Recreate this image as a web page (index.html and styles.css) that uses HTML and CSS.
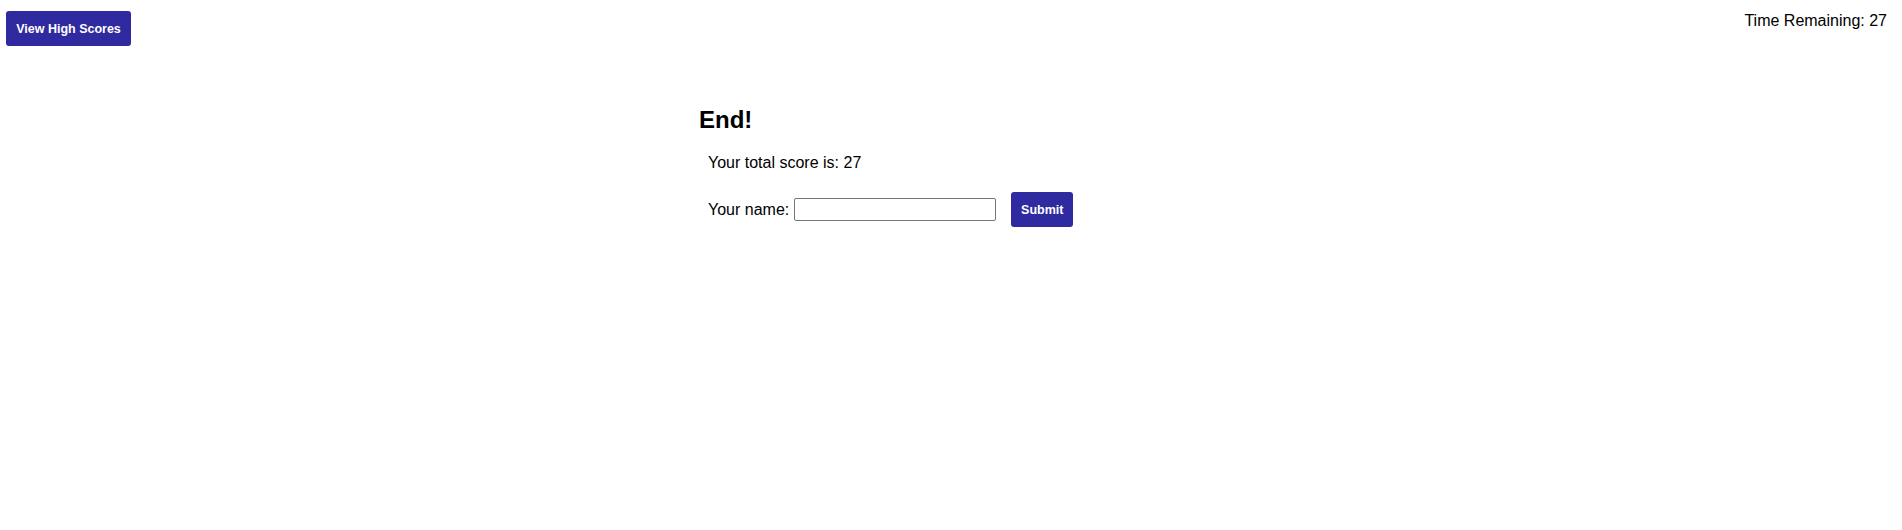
FILE: index.html
```html
<!DOCTYPE html>
<html lang="en">
<head>
<meta charset="utf-8">
<title>Quiz</title>
<link rel="stylesheet" href="styles.css">
</head>
<body>
<header class="topbar">
  <button class="btn btn-scores">View High Scores</button>
  <div class="timer">Time Remaining: 27</div>
</header>
<main class="quiz">
  <h2 class="quiz-title">End!</h2>
  <p class="score">Your total score is: 27</p>
  <form class="name-form">
    <label class="name-label" for="name">Your name:</label>
    <input class="name-input" id="name" type="text">
    <button class="btn btn-submit" type="button">Submit</button>
  </form>
</main>
</body>
</html>
```
FILE: styles.css
```css
html, body {
  margin: 0;
  padding: 0;
  background: #ffffff;
  font-family: "Liberation Sans", Arial, sans-serif;
  color: #000000;
}

.topbar {
  display: flex;
  justify-content: space-between;
  align-items: flex-start;
  padding: 11px 15px 0 6px;
}

.btn {
  background: #2f2a9f;
  color: #ffffff;
  border: none;
  border-radius: 3px;
  font-family: "Liberation Sans", Arial, sans-serif;
  font-weight: bold;
  font-size: 12.5px;
  height: 35px;
  padding: 0 10px;
  cursor: pointer;
}

.btn-scores {
  width: 125px;
  padding: 0;
}

.timer {
  font-size: 16px;
  line-height: 18px;
  margin-top: 1px;
}

.quiz {
  width: 504px;
  margin: 0 auto;
  padding-top: 60px;
}

.quiz-title {
  margin: 0;
  font-size: 24px;
  line-height: 28px;
  font-weight: bold;
}

.score {
  margin: 20px 0 0 9px;
  font-size: 16px;
  line-height: 18px;
}

.name-form {
  display: flex;
  align-items: center;
  margin: 20px 0 0 9px;
  font-size: 16px;
}

.name-label {
  margin-right: 5px;
}

.name-input {
  box-sizing: border-box;
  width: 202px;
  height: 23px;
  border: 1px solid #767676;
  border-radius: 2px;
  padding: 1px 2px;
  font-size: 13px;
}

.btn-submit {
  width: 62px;
  padding: 0;
  margin-left: 15px;
}
```
